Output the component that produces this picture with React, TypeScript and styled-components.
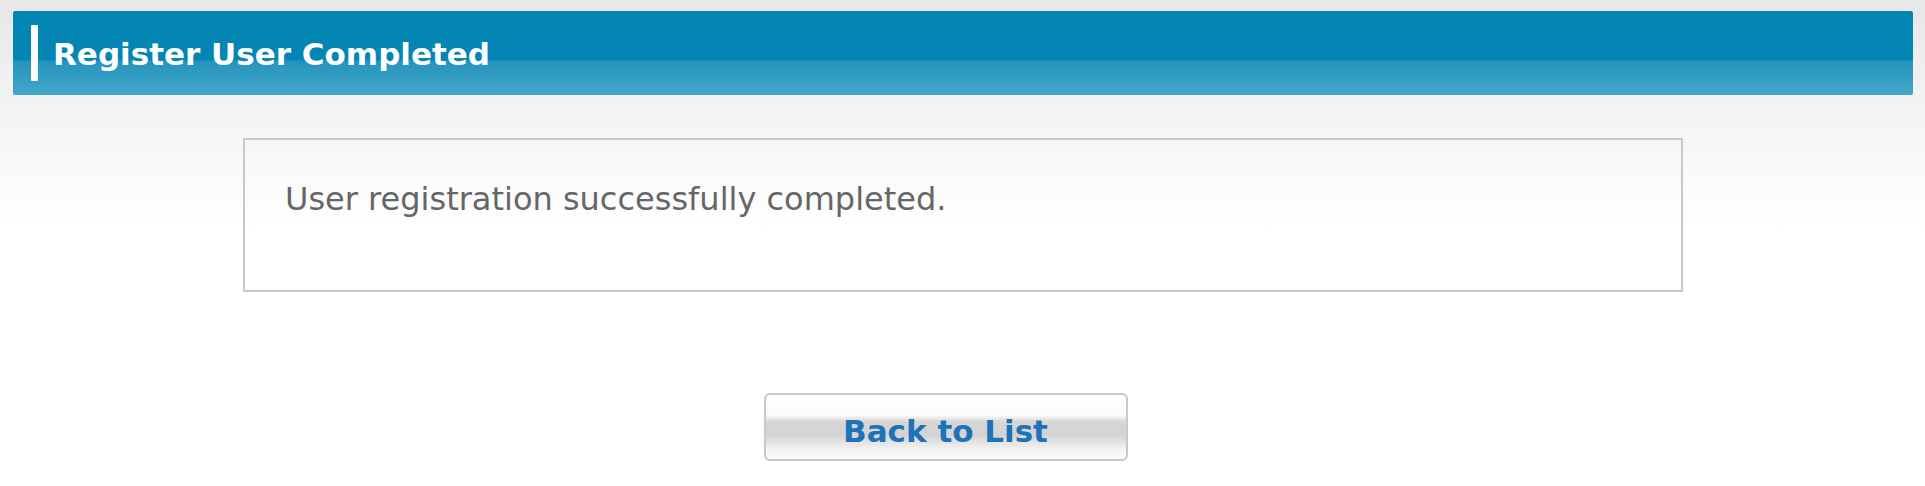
import styled, { createGlobalStyle } from 'styled-components';

const GlobalStyle = createGlobalStyle`
    html, body {
        margin: 0;
        padding: 0;
    }
    body {
        font-family: "DejaVu Sans", Verdana, sans-serif;
        background: linear-gradient(to bottom, #e7e7e7 0px, #f4f4f4 110px, #ffffff 230px) no-repeat;
        background-color: #fff;
        min-height: 486px;
    }
`;

const Page = styled.div`
    padding: 11px 12px 0 13px;
`;

const TitleBar = styled.div`
    height: 84px;
    border-radius: 2px;
    background: linear-gradient(to bottom, #0386b3 0px, #0386b3 49px, #2494bc 50px, #44a7ca 84px);
    display: flex;
    align-items: center;
    padding-left: 18px;
    gap: 15px;
`;

const TitleMark = styled.span`
    width: 7px;
    height: 56px;
    background: #fff;
    border-radius: 1px;
`;

const Title = styled.h1`
    margin: 0;
    color: #fff;
    font-size: 31px;
    font-weight: bold;
    padding-top: 2px;
`;

const MessageBox = styled.div`
    margin: 43px auto 0;
    width: 1440px;
    height: 154px;
    box-sizing: border-box;
    border: 2px solid #c8c8c8;
    padding: 40px 40px 0;
    color: #666;
    font-size: 32px;
`;

const ButtonRow = styled.div`
    display: flex;
    justify-content: center;
    padding-right: 35px;
    margin-top: 101px;
`;

const ListButton = styled.button`
    width: 364px;
    height: 68px;
    border: 2px solid #c8c8c8;
    border-radius: 6px;
    background: linear-gradient(to bottom, #ffffff 0px, #fbfbfb 20px, #d6d6d6 27px, #d3d3d3 40px, #f2f2f2 54px, #ffffff 66px);
    color: #1d72b8;
    font-family: "DejaVu Sans", Verdana, sans-serif;
    font-size: 31px;
    font-weight: bold;
    padding: 7px 0 0;
    cursor: pointer;
`;

const App = () => {
    return <>
        <GlobalStyle />
        <Page>
            <TitleBar>
                <TitleMark />
                <Title>Register User Completed</Title>
            </TitleBar>
            <MessageBox>User registration successfully completed.</MessageBox>
            <ButtonRow>
                <ListButton>Back to List</ListButton>
            </ButtonRow>
        </Page>
    </>
}

export default App;
